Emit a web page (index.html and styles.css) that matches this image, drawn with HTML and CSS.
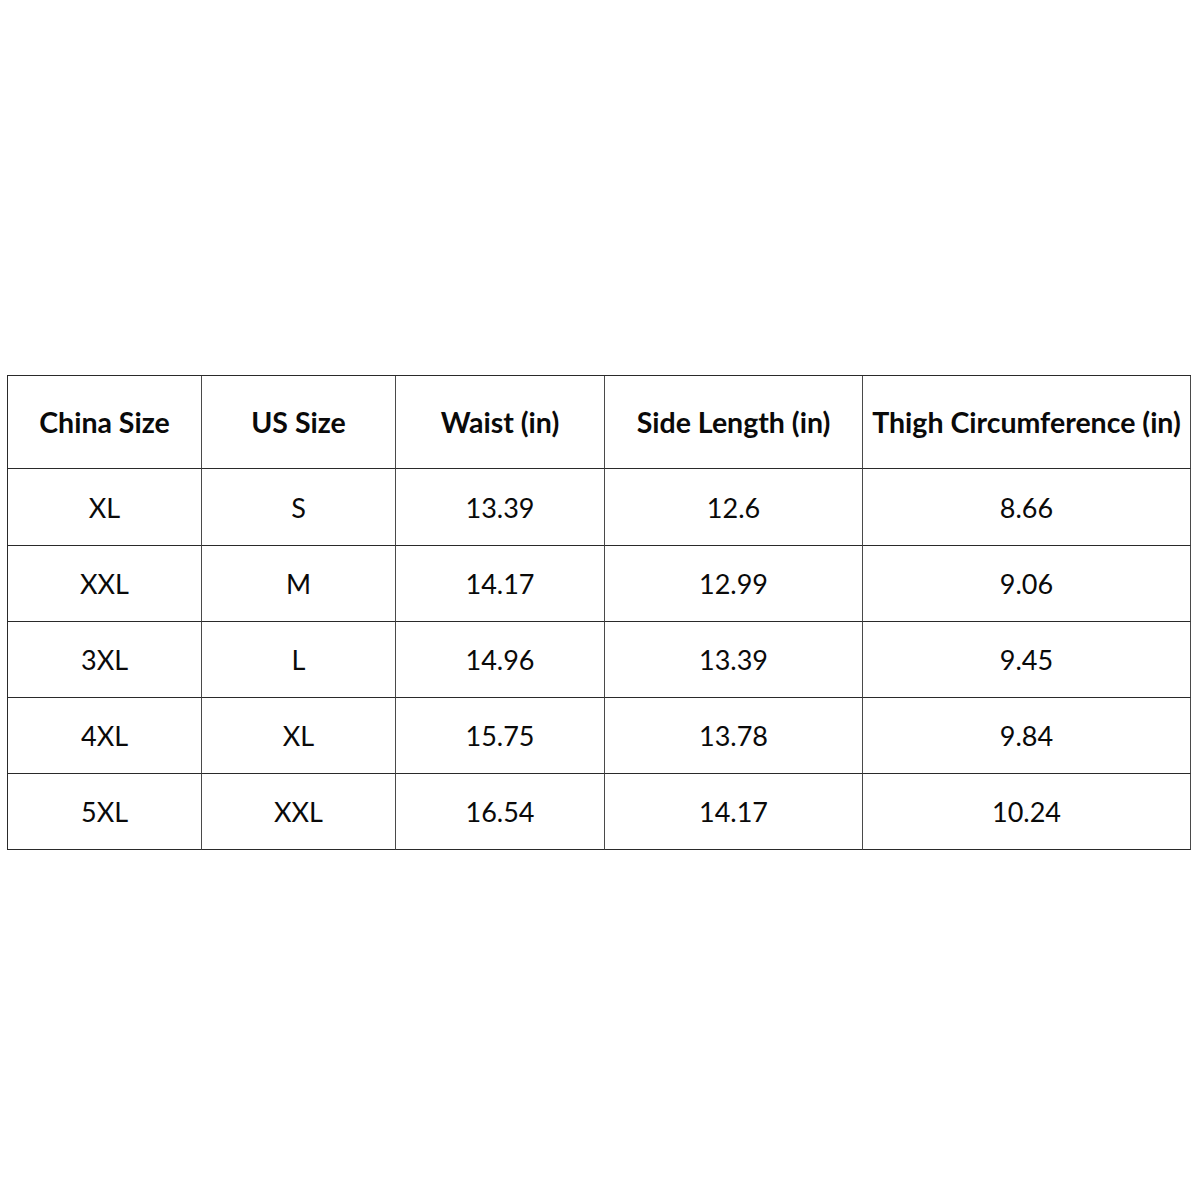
FILE: index.html
```html
<!DOCTYPE html>
<html>
<head>
<meta charset="utf-8">
<link rel="stylesheet" href="styles.css">
</head>
<body>
<div class="page">
  <div class="size-table">
    <div class="cell head">China Size</div>
    <div class="cell head">US Size</div>
    <div class="cell head">Waist (in)</div>
    <div class="cell head">Side Length (in)</div>
    <div class="cell head">Thigh Circumference (in)</div>

    <div class="cell first">XL</div>
    <div class="cell first">S</div>
    <div class="cell first">13.39</div>
    <div class="cell first">12.6</div>
    <div class="cell first">8.66</div>

    <div class="cell">XXL</div>
    <div class="cell">M</div>
    <div class="cell">14.17</div>
    <div class="cell">12.99</div>
    <div class="cell">9.06</div>

    <div class="cell">3XL</div>
    <div class="cell">L</div>
    <div class="cell">14.96</div>
    <div class="cell">13.39</div>
    <div class="cell">9.45</div>

    <div class="cell">4XL</div>
    <div class="cell">XL</div>
    <div class="cell">15.75</div>
    <div class="cell">13.78</div>
    <div class="cell">9.84</div>

    <div class="cell">5XL</div>
    <div class="cell">XXL</div>
    <div class="cell">16.54</div>
    <div class="cell">14.17</div>
    <div class="cell">10.24</div>
  </div>
</div>
</body>
</html>
```
FILE: styles.css
```css
html, body {
  margin: 0;
  padding: 0;
  background: #ffffff;
}
.page {
  width: 1200px;
  height: 1200px;
  padding: 375px 0 0 7px;
  box-sizing: border-box;
}
.size-table {
  display: grid;
  grid-template-columns: 194px 194px 209px 258px 328px;
  grid-template-rows: 93px 77px 76px 76px 76px 76px;
  width: max-content;
  border-left: 1px solid #2a2a2a;
  border-top: 1px solid #2a2a2a;
  font-family: "Lato", "Open Sans", sans-serif;
  color: #0a0a0a;
}
.cell {
  box-sizing: border-box;
  border-right: 1px solid #4a4a4a;
  border-bottom: 1px solid #2a2a2a;
  display: flex;
  align-items: center;
  justify-content: center;
  font-size: 27px;
  white-space: nowrap;
}
.cell.head {
  font-weight: 700;
  font-size: 28.5px;
}
```
